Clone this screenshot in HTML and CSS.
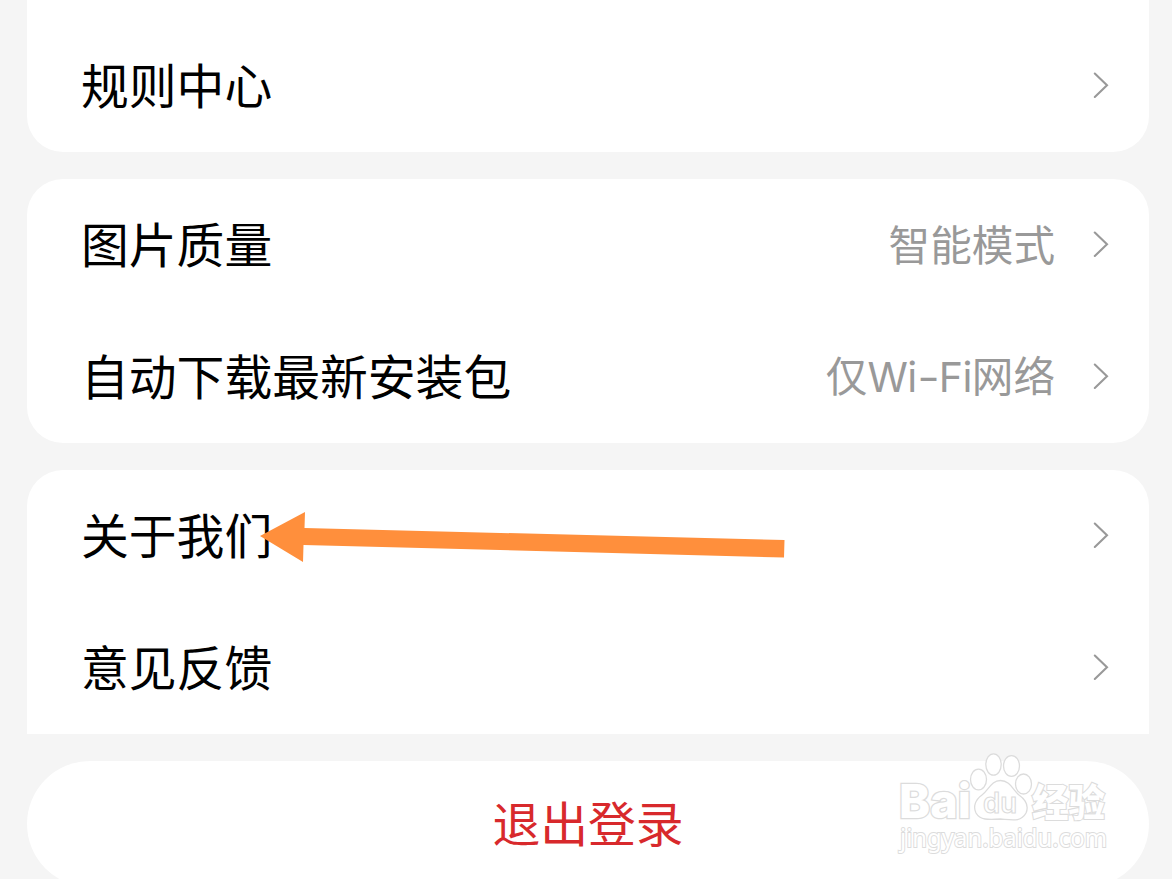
FILE: index.html
```html
<!DOCTYPE html>
<html lang="zh-CN">
<head>
    <meta charset="UTF-8">
    <meta name="viewport" content="width=device-width, initial-scale=1.0">
    <title>设置</title>
    <link rel="stylesheet" href="styles.css">
</head>
<body>
    <main class="settings">
        <section class="card card-first">
            <div class="row">
                <span class="label">规则中心</span>
                <svg class="chevron" viewBox="0 0 16 28"><path d="M1.8 2.500 14 14.200 1.800 26"/></svg>
            </div>
        </section>

        <section class="card">
            <div class="row">
                <span class="label">图片质量</span>
                <span class="value">智能模式</span>
                <svg class="chevron" viewBox="0 0 16 28"><path d="M1.8 2.500 14 14.200 1.800 26"/></svg>
            </div>
            <div class="row">
                <span class="label">自动下载最新安装包</span>
                <span class="value">仅<span class="latin">Wi<span class="dash">-</span>Fi</span>网络</span>
                <svg class="chevron" viewBox="0 0 16 28"><path d="M1.8 2.500 14 14.200 1.800 26"/></svg>
            </div>
        </section>

        <section class="card card-last">
            <div class="row">
                <span class="label">关于我们</span>
                <svg class="chevron" viewBox="0 0 16 28"><path d="M1.8 2.500 14 14.200 1.800 26"/></svg>
                <svg class="arrow" viewBox="0 0 526 52"><path d="M0 25 45 1 44.500 17 524.500 29 524 46.500 43.500 34 43 51Z"/></svg>
            </div>
            <div class="row">
                <span class="label">意见反馈</span>
                <svg class="chevron" viewBox="0 0 16 28"><path d="M1.8 2.500 14 14.200 1.800 26"/></svg>
            </div>
        </section>

        <button class="logout" type="button"><span class="logout-text">退出登录</span></button>
    </main>

    <svg class="watermark" viewBox="0 0 230 120">
        <text class="brand" x="5" y="68" textLength="72" lengthAdjust="spacingAndGlyphs">Bai</text>
        <ellipse cx="84.500" cy="29.500" rx="8" ry="10.300"/>
        <ellipse cx="99.500" cy="14.500" rx="7.700" ry="10.700"/>
        <ellipse cx="117.500" cy="16" rx="8" ry="10.300"/>
        <ellipse cx="129.500" cy="34" rx="8" ry="10"/>
        <path d="M106.500 30.500C97 30.500 95 40 88 45C81 50 79 57 82 63C86 70 94 70 106.500 69C119 70 127 72 132 63C135 56 132 50 125 45C119 40 116 30.500 106.500 30.500Z"/>
        <text class="du" x="89" y="63" textLength="34" lengthAdjust="spacingAndGlyphs">du</text>
        <text class="exp" x="138" y="66" textLength="73" lengthAdjust="spacingAndGlyphs">经验</text>
        <text class="site" x="6" y="97" textLength="207" lengthAdjust="spacingAndGlyphs">jingyan.baidu.com</text>
    </svg>
</body>
</html>
```
FILE: styles.css
```css
body {
    margin: 0;
    height: 879px;
    overflow: hidden;
    background-color: #f5f5f5;
    font-family: "Noto Sans CJK SC", sans-serif;
    position: relative;
}

.settings {
    display: flex;
    flex-direction: column;
    gap: 27px;
    padding: 0 23px 0 27px;
}

.card {
    background-color: #fff;
    border-radius: 36px;
}

.card-first {
    padding-top: 20px;
    border-radius: 0 0 36px 36px;
}

.card-last {
    border-radius: 36px 36px 0 0;
}

.row {
    box-sizing: border-box;
    height: 132px;
    padding: 0 40px 2px 54px;
    display: flex;
    align-items: center;
    position: relative;
}

.label {
    flex: 1;
    padding-bottom: 3px;
    font-size: 47.8px;
    line-height: 70px;
    color: #000;
}

.value {
    margin-right: 38px;
    padding-bottom: 2px;
    font-size: 41.6px;
    line-height: 60px;
    color: #999;
}

.latin {
    font-family: Inter, sans-serif;
    font-weight: 400;
    font-size: 41px;
    letter-spacing: -0.6px;
}

.dash {
    display: inline-block;
    margin: 0 2px;
    transform: scaleX(1.2);
}

.chevron {
    width: 16px;
    height: 28px;
    fill: none;
    stroke: #999;
    stroke-width: 2.1;
    stroke-linecap: round;
}

/* pointer drawn over the row */
.arrow {
    position: absolute;
    left: 233px;
    top: 41px;
    width: 526px;
    height: 52px;
    fill: #ff8f3c;
}

.logout {
    height: 126px;
    flex-shrink: 0;
    padding: 0;
    border: none;
    border-radius: 63px;
    background-color: #fff;
    font-family: inherit;
    font-size: 47.8px;
    color: #d8292c;
}

.logout-text {
    display: block;
    padding-bottom: 6px;
}

.watermark {
    position: absolute;
    left: 894px;
    top: 750px;
    width: 230px;
    height: 120px;
    overflow: visible;
    fill: #fff;
    stroke: #dcdcdc;
    stroke-width: 1.3;
}

.brand,
.exp,
.site {
    paint-order: stroke;
    stroke-width: 2.6;
}

.brand {
    font: 800 47px Inter, sans-serif;
}

.du {
    font: 600 28px Inter, sans-serif;
    stroke-width: 1.1;
}

.exp {
    font: 900 38px "Noto Sans CJK SC", sans-serif;
    stroke-width: 2.2;
}

.site {
    font: 26px "Noto Sans", sans-serif;
    stroke-width: 2;
}
```
